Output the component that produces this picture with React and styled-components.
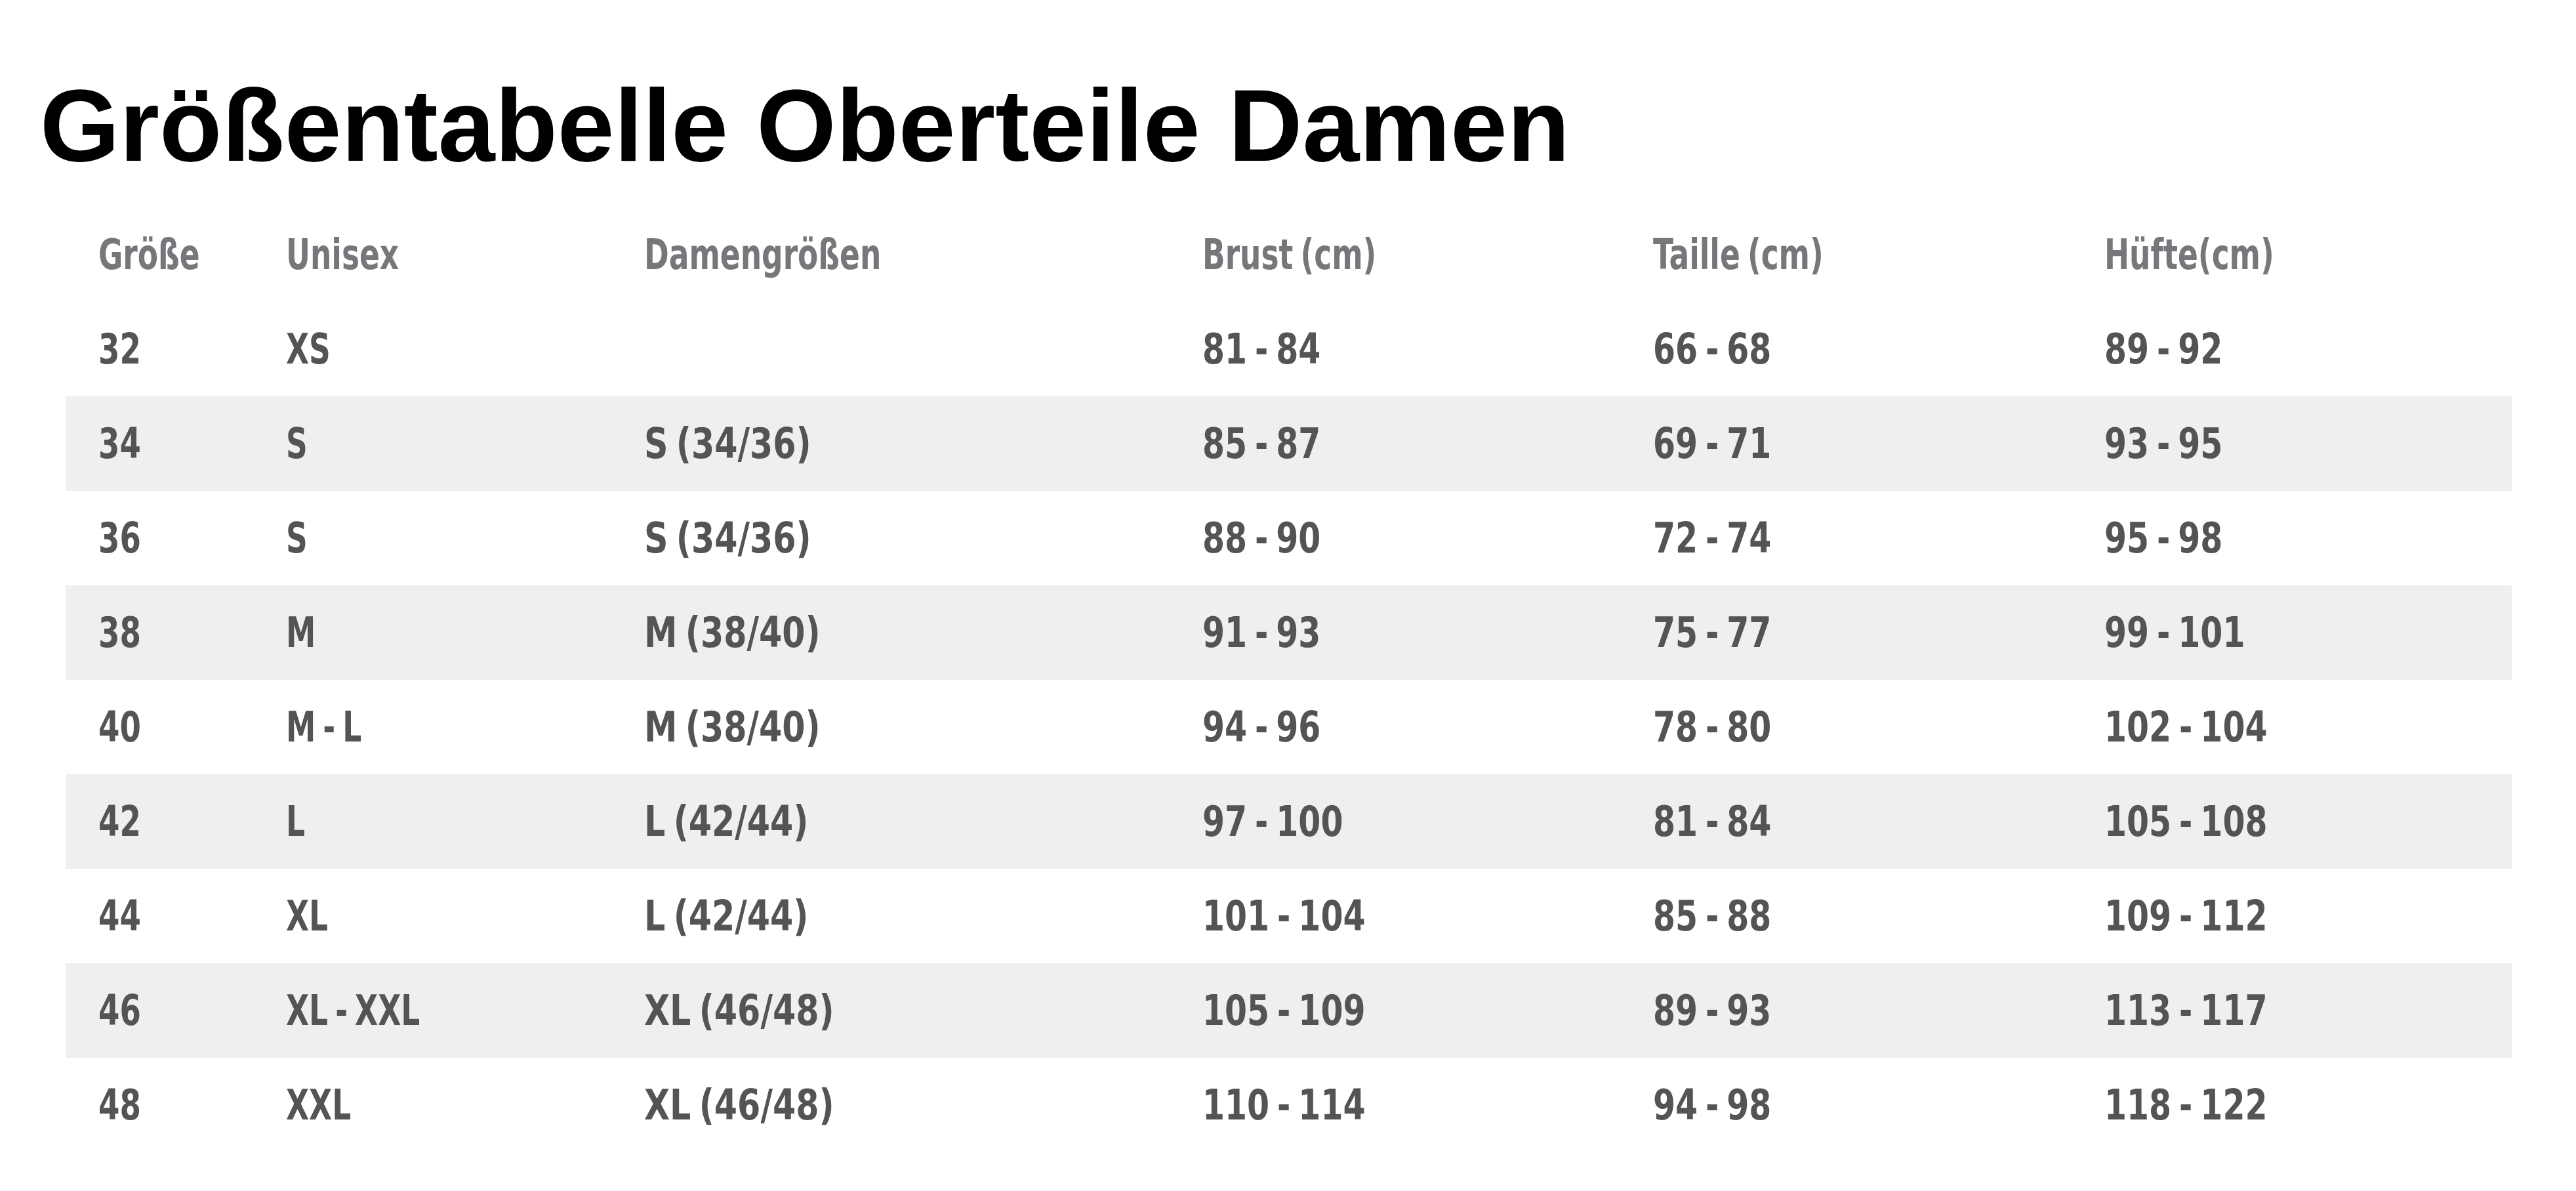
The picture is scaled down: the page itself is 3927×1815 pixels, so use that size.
import React from 'react';
import styled, { createGlobalStyle } from 'styled-components';

const GlobalStyle = createGlobalStyle`
  html, body {
    margin: 0;
    padding: 0;
    background: #ffffff;
  }
`;

const Page = styled.div`
  width: 3927px;
  min-height: 1815px;
  background: #ffffff;
  box-sizing: border-box;
  padding-top: 113px;
`;

const Title = styled.h1`
  margin: 0 0 0 61px;
  font-family: "Liberation Sans", Arial, sans-serif;
  font-weight: 700;
  font-size: 156px;
  line-height: 156px;
  color: #000000;
`;

const Table = styled.div`
  margin: 47px 0 0 100px;
  width: 3729px;
  display: flex;
  flex-direction: column;
`;

const Row = styled.div`
  display: grid;
  grid-template-columns: 286px 546px 851px 687px 688px 671px;
  height: 144px;
  align-items: center;
  background: ${props => props.$striped ? '#efefef' : 'transparent'};
`;

const Cell = styled.div`
  padding-left: 50px;
  font-family: "DejaVu Sans Condensed", "DejaVu Sans", sans-serif;
  font-weight: 700;
  font-size: 64px;
  line-height: 1;
  white-space: nowrap;
  color: ${props => props.$head ? '#77777b' : '#545454'};
`;

// the reference uses a heavy condensed face; squeeze the condensed DejaVu to match
const Squeezed = styled.span`
  display: inline-block;
  transform: scaleX(${props => props.$squeeze || 0.79});
  transform-origin: left center;
  word-spacing: -6px;
`;

const headers = ['Größe', 'Unisex', 'Damengrößen', 'Brust (cm)', 'Taille (cm)', 'Hüfte(cm)'];

// digits in the reference face run wider than its letters
const dataSqueeze = [0.81, 0.79, 0.88, 0.85, 0.85, 0.85];

const rows = [
  ['32', 'XS', '', '81 - 84', '66 - 68', '89 - 92'],
  ['34', 'S', 'S (34/36)', '85 - 87', '69 - 71', '93 - 95'],
  ['36', 'S', 'S (34/36)', '88 - 90', '72 - 74', '95 - 98'],
  ['38', 'M', 'M (38/40)', '91 - 93', '75 - 77', '99 - 101'],
  ['40', 'M - L', 'M (38/40)', '94 - 96', '78 - 80', '102 - 104'],
  ['42', 'L', 'L (42/44)', '97 - 100', '81 - 84', '105 - 108'],
  ['44', 'XL', 'L (42/44)', '101 - 104', '85 - 88', '109 - 112'],
  ['46', 'XL - XXL', 'XL (46/48)', '105 - 109', '89 - 93', '113 - 117'],
  ['48', 'XXL', 'XL (46/48)', '110 - 114', '94 - 98', '118 - 122'],
];

const App = () => (
  <Page>
    <GlobalStyle />
    <Title>Größentabelle Oberteile Damen</Title>
    <Table>
      <Row>
        {headers.map(h => <Cell $head key={h}><Squeezed>{h}</Squeezed></Cell>)}
      </Row>
      {rows.map((r, i) => (
        <Row key={r[0]} $striped={i % 2 === 1}>
          {r.map((c, j) => (
            <Cell key={j}><Squeezed $squeeze={dataSqueeze[j]}>{c}</Squeezed></Cell>
          ))}
        </Row>
      ))}
    </Table>
  </Page>
);

export default App;
